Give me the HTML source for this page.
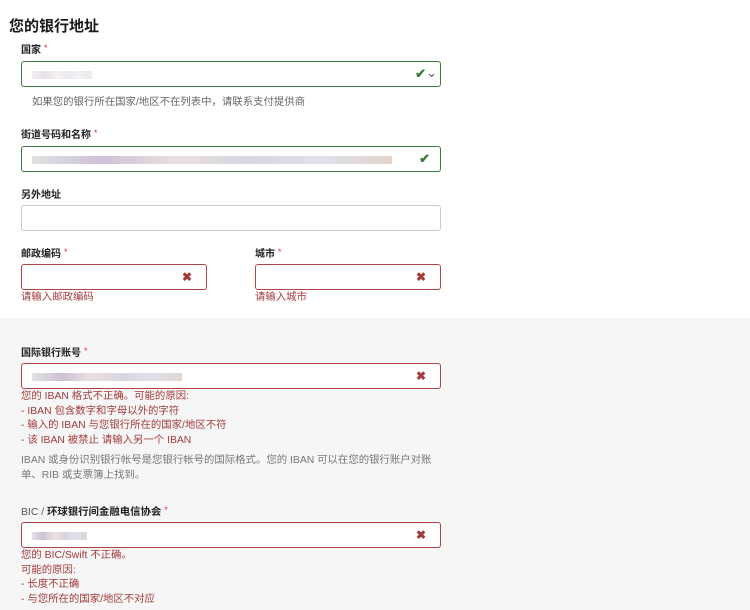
<!DOCTYPE html>
<html><head><meta charset="utf-8"><style>
*{margin:0;padding:0;box-sizing:border-box}
body{width:750px;height:610px;overflow:hidden;background:#fff;font-family:"Liberation Sans","Noto Sans CJK SC",sans-serif;color:#222;position:relative}
.a{position:absolute;white-space:nowrap}
.t{left:9px;top:15px;font-size:15px;font-weight:bold;color:#1a1a1a}
.l{font-size:10px;font-weight:bold;color:#222}
.l i,.s{color:#d33;font-style:normal;font-weight:normal;font-size:9px;margin-left:3px;position:relative;top:-2px}
.in{height:26px;border:1px solid #ccc;border-radius:3px;background:#fff}
.g{border-color:#3d7a3d}
.r{border-color:#b04545}
.h{font-size:10.4px;color:#666}
.e{font-size:10.4px;color:#a23b3b;line-height:14.6px}
.x{position:absolute;right:14px;top:5px;color:#a23b3b;font-size:12px;font-weight:bold}
.c{position:absolute;top:4px;color:#3d7a3d;font-size:13px;font-weight:bold}
.blur{position:absolute;left:10px;top:9px;height:8px;background:linear-gradient(90deg,#ccc,#a9b,#dcc,#bbc,#ccd,#cba);opacity:.6}
.gray{position:absolute;left:0;top:318px;width:750px;height:292px;background:#f6f6f6}
</style></head><body>
<div class="a t">您的银行地址</div>
<div class="a l" style="left:21px;top:41px">国家<i>*</i></div>
<div class="a in g" style="left:21px;top:61px;width:420px"><div class="blur" style="width:60px;opacity:.3"></div><span class="c" style="right:14px">✔</span><span style="position:absolute;right:3px;top:3px;color:#555;font-size:13px">⌄</span></div>
<div class="a h" style="left:32px;top:93px">如果您的银行所在国家/地区不在列表中，请联系支付提供商</div>
<div class="a l" style="left:21px;top:126px">街道号码和名称<i>*</i></div>
<div class="a in g" style="left:21px;top:146px;width:420px"><div class="blur" style="width:360px"></div><span class="c" style="right:10px">✔</span></div>
<div class="a l" style="left:21px;top:186px">另外地址</div>
<div class="a in" style="left:21px;top:205px;width:420px"></div>
<div class="a l" style="left:21px;top:245px">邮政编码<i>*</i></div>
<div class="a in r" style="left:21px;top:264px;width:186px"><span class="x">✖</span></div>
<div class="a e" style="left:21px;top:291px">请输入邮政编码</div>
<div class="a l" style="left:255px;top:245px">城市<i>*</i></div>
<div class="a in r" style="left:255px;top:264px;width:186px"><span class="x">✖</span></div>
<div class="a e" style="left:255px;top:291px">请输入城市</div>
<div class="gray"></div>
<div class="a l" style="left:21px;top:344px">国际银行账号<i>*</i></div>
<div class="a in r" style="left:21px;top:363px;width:420px"><div class="blur" style="width:150px"></div><span class="x">✖</span></div>
<div class="a e" style="left:21px;top:390px">您的 IBAN 格式不正确。可能的原因:<br>- IBAN 包含数字和字母以外的字符<br>- 输入的 IBAN 与您银行所在的国家/地区不符<br>- 该 IBAN 被禁止 请输入另一个 IBAN</div>
<div class="a h" style="left:21px;top:454px;line-height:14.6px;color:#777">IBAN 或身份识别银行帐号是您银行帐号的国际格式。您的 IBAN 可以在您的银行账户对账<br>单、RIB 或支票簿上找到。</div>
<div class="a" style="left:21px;top:503px;font-size:10.4px;color:#555">BIC / <b style="color:#222">环球银行间金融电信协会</b><span class="s">*</span></div>
<div class="a in r" style="left:21px;top:522px;width:420px"><div class="blur" style="width:55px"></div><span class="x">✖</span></div>
<div class="a e" style="left:21px;top:549px">您的 BIC/Swift 不正确。<br>可能的原因:<br>- 长度不正确<br>- 与您所在的国家/地区不对应</div>
</body></html>
